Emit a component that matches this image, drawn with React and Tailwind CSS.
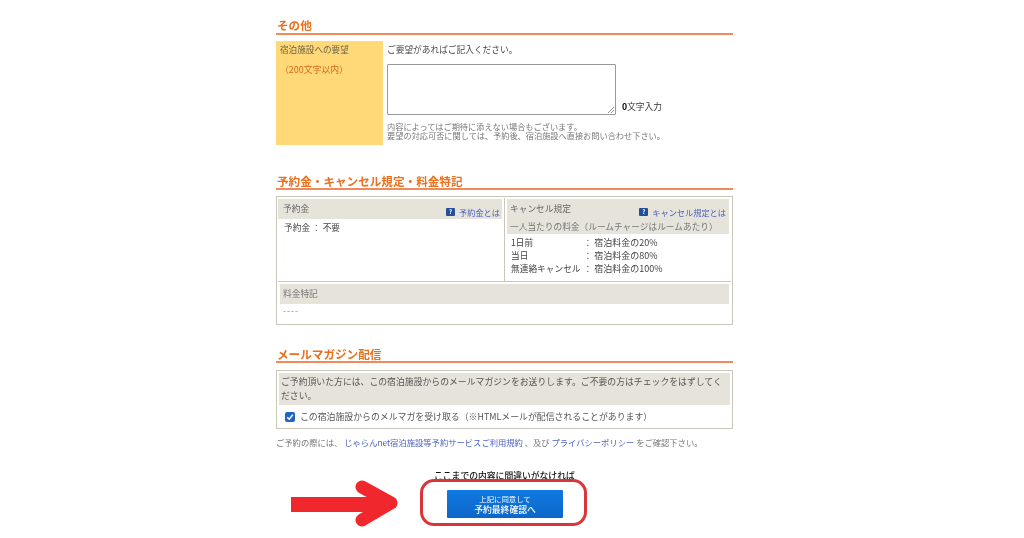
import React from 'react';

const FONT = "font-['Noto_Sans_CJK_JP','Liberation_Sans',sans-serif]";

const SectionTitle = ({ children, className = '' }) => (
    <div className={`h-[17px] border-b-2 border-[#ee8a5c] pl-px text-[11.6px] leading-[14px] font-bold text-[#e9701f] ${className}`}>
        {children}
    </div>
);

const HelpLink = ({ children }) => (
    <span className="flex items-center gap-[4px] text-[8.2px] leading-[12px] text-[#4a5fc0]">
        <span className="flex h-[8px] w-[9px] items-center justify-center rounded-[1px] bg-[#24509a] text-[6px] leading-none font-bold text-white">?</span>
        {children}
    </span>
);

const App = () => {
    return (
        <div className={`relative h-[538px] w-[1024px] overflow-hidden bg-white text-[8.7px] text-[#555] blur-[0.4px] ${FONT}`}>
            <div className="ml-[276px] w-[457px] pt-[18px]">
                {/* その他 */}
                <SectionTitle>その他</SectionTitle>
                <div className="mt-[6px] flex h-[104px]">
                    <div className="w-[107px] bg-[#ffd977] pl-[4px] pt-[2px]">
                        <p className="text-[8.6px] leading-[13px] text-[#6b6248]">宿泊施設への要望</p>
                        <p className="mt-[7px] text-[8.9px] leading-[13px] text-[#d2691e]">（200文字以内）</p>
                    </div>
                    <div className="pl-[4px] pt-[2px]">
                        <p className="leading-[13px] text-[#444]">ご要望があればご記入ください。</p>
                        <div className="mt-[8px] flex items-end">
                            <div className="relative h-[51px] w-[229px] rounded-[1px] border border-[#999] bg-white">
                                <svg className="absolute right-0 bottom-0" width="8" height="8" viewBox="0 0 8 8">
                                    <path d="M7 1 1 7M7 4 4 7" stroke="#777" strokeWidth="0.8" fill="none" />
                                </svg>
                            </div>
                            <p className="mb-[2px] ml-[6px] leading-[12px] text-[#333]"><b className="text-black">0</b>文字入力</p>
                        </div>
                        <p className="mt-[7px] text-[8.2px] leading-[9px] text-[#777]">
                            内容によってはご期待に添えない場合もございます。<br />
                            要望の対応可否に関しては、予約後、宿泊施設へ直接お問い合わせ下さい。
                        </p>
                    </div>
                </div>

                {/* 予約金 */}
                <SectionTitle className="mt-[28px] pt-px">予約金・キャンセル規定・料金特記</SectionTitle>
                <div className="mt-[6px] h-[129px] border border-[#c9c6ba] px-px pt-[1px]">
                    <div className="flex h-[84px] border-b border-[#c9c6ba]">
                        <div className="w-[227px] border-r border-[#c9c6ba] pr-[2px] pt-px">
                            <div className="flex h-[20px] items-center justify-between bg-[#e6e3da] pl-[5px] pr-[2px]">
                                <span className="leading-[12px] text-[#666]">予約金</span>
                                <span className="mt-[5px]"><HelpLink>予約金とは</HelpLink></span>
                            </div>
                            <p className="mt-[3px] pl-[6px] leading-[12px] text-[#444]">予約金 ： 不要</p>
                        </div>
                        <div className="flex-1 px-[2px] pt-px">
                            <div className="h-[35px] bg-[#e6e3da] px-[3px] pt-[3px]">
                                <div className="flex items-start justify-between">
                                    <span className="leading-[14px] text-[#666]">キャンセル規定</span>
                                    <span className="mt-[4px]"><HelpLink>キャンセル規定とは</HelpLink></span>
                                </div>
                                <p className="mt-[3px] leading-[12px] text-[#777]">一人当たりの料金（ルームチャージはルームあたり）</p>
                            </div>
                            <div className="mt-[2px] grid grid-cols-[auto_auto_1fr] gap-x-[2px] pl-[4px] leading-[13px] text-[#444]">
                                <span>1日前</span><span className="ml-px">：</span><span className="text-[9px]">宿泊料金の20%</span>
                                <span>当日</span><span className="ml-px">：</span><span className="text-[9px]">宿泊料金の80%</span>
                                <span>無連絡キャンセル</span><span className="ml-px">：</span><span className="text-[9px]">宿泊料金の100%</span>
                            </div>
                        </div>
                    </div>
                    <div className="mt-[2px]">
                        <div className="mx-[2px] flex h-[20px] items-center bg-[#e6e3da] pl-[3px] leading-[12px] text-[#777]">料金特記</div>
                        <p className="mt-px pl-[5px] leading-[12px] tracking-[1px] text-[#888]">----</p>
                    </div>
                </div>

                {/* メールマガジン */}
                <SectionTitle className="mt-[21px] pt-px">メールマガジン配信</SectionTitle>
                <div className="mt-[7px] h-[59px] border border-[#c9c6ba] p-[2px]">
                    <div className="h-[32px] bg-[#e6e3da] px-[2px] py-[2px] text-[8.85px] leading-[14px] text-[#555]">
                        ご予約頂いた方には、この宿泊施設からのメールマガジンをお送りします。ご不要の方はチェックをはずしてください。
                    </div>
                    <label className="mt-[5px] flex items-center pl-[6px] leading-[14px] text-[#555]">
                        <span className="flex h-[10px] w-[10px] items-center justify-center rounded-[2px] bg-[#1f66c4]">
                            <svg width="8" height="8" viewBox="0 0 8 8">
                                <path d="M1.2 4.2 3.2 6.2 6.8 1.8" stroke="#fff" strokeWidth="1.5" fill="none" />
                            </svg>
                        </span>
                        <span className="ml-[5px] text-[8.9px]">この宿泊施設からのメルマガを受け取る（※HTMLメールが配信されることがあります）</span>
                    </label>
                </div>
                <p className="mt-[7px] whitespace-nowrap text-[8.3px] leading-[12px] text-[#777]">
                    ご予約の際には、 <span className="text-[#4a5fc0]">じゃらんnet宿泊施設等予約サービスご利用規約</span> 、及び <span className="text-[#4a5fc0]">プライバシーポリシー</span> をご確認下さい。
                </p>

                {/* 確定ボタン */}
                <p className="mt-[22px] ml-[158px] text-[8.8px] leading-[12px] font-medium text-[#111]">ここまでの内容に間違いがなければ</p>
                <div className="mt-[8px] ml-[171px] flex h-[28px] w-[116px] flex-col items-center justify-center rounded-[1px] bg-gradient-to-b from-[#1079e2] to-[#0d66c8] text-white">
                    <span className="text-[7.4px] leading-[11px]">上記に同意して</span>
                    <span className="text-[8.8px] leading-[12px] font-medium">予約最終確認へ</span>
                </div>
            </div>

            {/* 赤い注釈 */}
            <div className="absolute left-[420px] top-[479px] h-[47px] w-[167px] rounded-[14px] border-[3px] border-[#d9363c]"></div>
            <svg className="absolute left-[290px] top-[476px]" width="110" height="54" viewBox="0 0 110 54">
                <path d="M1 21H92V36H1Z" fill="#f0282d" />
                <path d="M72 11 101 27 72 44" stroke="#f0282d" strokeWidth="13" strokeLinecap="round" strokeLinejoin="round" fill="none" />
            </svg>
        </div>
    );
};

export default App;
